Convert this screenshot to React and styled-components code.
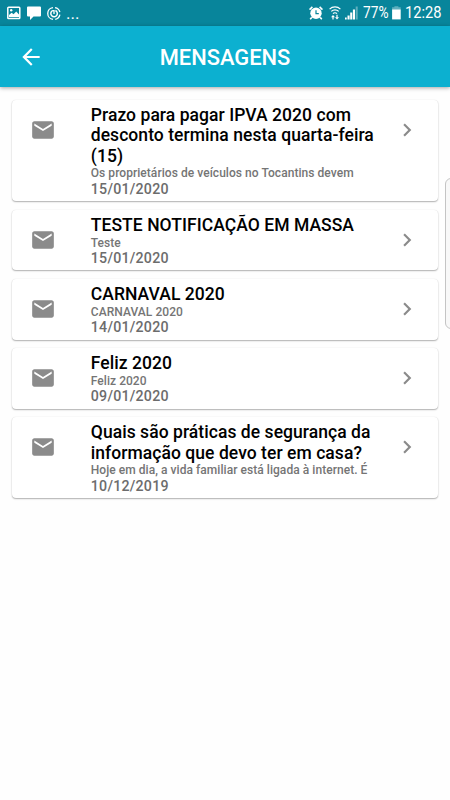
import React from 'react';
import styled, {createGlobalStyle} from 'styled-components';

const teal = '#0cb0d0';
const tealDark = '#08859b';
const iconGrey = '#8b8b8b';

const messages = [
    {
        title: ['Prazo para pagar IPVA 2020 com', 'desconto termina nesta quarta-feira', '(15)'],
        text: 'Os proprietários de veículos no Tocantins devem',
        date: '15/01/2020',
    },
    {title: ['TESTE NOTIFICAÇÃO EM MASSA'], text: 'Teste', date: '15/01/2020'},
    {title: ['CARNAVAL 2020'], text: 'CARNAVAL 2020', date: '14/01/2020'},
    {title: ['Feliz 2020'], text: 'Feliz 2020', date: '09/01/2020'},
    {
        title: ['Quais são práticas de segurança da', 'informação que devo ter em casa?'],
        text: 'Hoje em dia, a vida familiar está ligada à internet. É',
        date: '10/12/2019',
    },
];

const StatusIcons = () => (
    <Notifications>
        <svg width="14" height="14" viewBox="0 0 14 14">
            <rect x="0.8" y="1.3" width="12" height="11.2" rx="0.8" fill="none" stroke="#fff" strokeWidth="1.5" />
            <path d="M2 11V9l2.6-2.2 2 1.5L9.2 5.6 12 8.5V11z" fill="#fff" />
            <circle cx="4.2" cy="4.2" r="1.2" fill="#fff" />
        </svg>
        <svg width="14" height="14" viewBox="0 0 14 14">
            <path d="M1 0.5h12a1 1 0 0 1 1 1v8a1 1 0 0 1-1 1H6.5L3 14v-3.5H1a1 1 0 0 1-1-1v-8a1 1 0 0 1 1-1z" fill="#fff" />
        </svg>
        <svg width="14" height="15" viewBox="0 0 15 15" fill="none" stroke="#fff">
            <path d="M8.6 1.1a6.4 6.4 0 0 1 5.2 5M13.8 8.6a6.4 6.4 0 0 1-5 5.1M6.4 13.8A6.4 6.4 0 0 1 6.4 1.1" strokeWidth="1.4" />
            <path d="M9 4.3a3.5 3.5 0 1 1-3.4 0.3" strokeWidth="1.6" />
            <path d="M5.5 4.4h2v3.6" strokeWidth="1.4" />
        </svg>
        <Dots>...</Dots>
    </Notifications>
);

const SystemIcons = () => (
    <System>
        <svg width="14" height="14" viewBox="0 0 14 14">
            <path d="M0.5 3.6 3.4 0.8M13.5 3.6 10.6 0.8M2.8 11.4 1.2 13.2M11.2 11.4l1.6 1.8" stroke="#fff" strokeWidth="1.6" />
            <circle cx="7" cy="7.3" r="5.7" fill="#fff" />
            <path d="M7 4.2v3.4h2.8" fill="none" stroke={tealDark} strokeWidth="1.2" />
        </svg>
        <Wifi viewBox="0 0 12 14">
            <path d="M0.6 3.2a7.6 7.6 0 0 1 10.8 0M2.3 5.4a5.3 5.3 0 0 1 7.4 0M4 7.6a2.8 2.8 0 0 1 4 0" />
            <path d="M2 11.2 4 8.9l2 2.3zM6 11.2h4l-2 2.3z" fill="#fff" stroke="none" />
            <path d="M4 10v3.4M8 8.8v3" />
        </Wifi>
        <svg width="13" height="14" viewBox="0 0 13 14" fill="#fff">
            <rect x="0" y="11.5" width="1.7" height="2" />
            <rect x="2.5" y="9.5" width="2.1" height="4" />
            <rect x="5.2" y="6.5" width="2.1" height="7" />
            <rect x="7.9" y="3.5" width="2.1" height="10" />
            <rect x="10.7" y="0.5" width="2" height="13" opacity="0.35" />
        </svg>
        <Percent>77%</Percent>
        <svg width="9" height="14" viewBox="0 0 9 14" fill="#fff">
            <path d="M2.4 0.3h4v1h2.3v2.2H0.1V1.3h2.3z" opacity="0.35" />
            <rect x="0.1" y="3.4" width="8.6" height="10" />
        </svg>
        <Clock>12:28</Clock>
    </System>
);

const Message = ({title, text, date}) => (
    <Card>
        <MailIcon viewBox="0 0 24 24">
            <path d="M20 4H4c-1.1 0-1.99.9-1.99 2L2 18c0 1.1.9 2 2 2h16c1.1 0 2-.9 2-2V6c0-1.1-.9-2-2-2zm0 4l-8 5-8-5V6l8 5 8-5v2z" />
        </MailIcon>
        <Body>
            {title.map(line => (
                <Title key={line}>{line}</Title>
            ))}
            <Text>{text}</Text>
            <Date>{date}</Date>
        </Body>
        <Chevron viewBox="0 0 24 24">
            <path d="M10 6 8.59 7.41 13.17 12l-4.58 4.59L10 18l6-6z" />
        </Chevron>
    </Card>
);

const App = () => (
    <Screen>
        <GlobalStyle />
        <StatusBar>
            <StatusIcons />
            <SystemIcons />
        </StatusBar>
        <Header>
            <Back viewBox="0 0 24 24">
                <path d="M20 11H7.83l5.59-5.59L12 4l-8 8 8 8 1.41-1.41L7.83 13H20v-2z" />
            </Back>
            <Heading>MENSAGENS</Heading>
        </Header>
        <List>
            {messages.map(message => (
                <Message key={message.title[0]} {...message} />
            ))}
        </List>
        <EdgeHandle />
    </Screen>
);

export default App;

const GlobalStyle = createGlobalStyle`
    body {
        margin: 0;
        font-family: Roboto, sans-serif;
        background: #fefefe;
    }
`;

const Screen = styled.div`
    position: relative;
    display: flex;
    flex-direction: column;
    width: 450px;
    height: 800px;
    overflow: hidden;
    background: #fefefe;
`;

const StatusBar = styled.div`
    display: flex;
    justify-content: space-between;
    box-sizing: border-box;
    height: 26px;
    padding: 0 9px 0 7px;
    background: ${tealDark};
    color: white;
`;

const Notifications = styled.div`
    display: flex;
    align-items: center;
    gap: 6px;
`;

const Dots = styled.span`
    font-size: 17px;
    line-height: 29px;
    margin-left: -1px;
`;

const System = styled.div`
    display: flex;
    align-items: center;
`;

const Wifi = styled.svg`
    width: 12px;
    height: 14px;
    margin: 0 4px 0 6px;
    fill: none;
    stroke: white;
    stroke-width: 1.2px;
`;

const Percent = styled.span`
    width: 27px;
    margin-left: 5px;
    margin-right: 2px;
    font-size: 16.5px;
    line-height: 28px;
    white-space: nowrap;
    transform: scaleX(0.83);
    transform-origin: left;
`;

const Clock = styled.span`
    width: 36px;
    margin-left: 4px;
    font-size: 16.5px;
    line-height: 28px;
    white-space: nowrap;
    transform: scaleX(0.89);
    transform-origin: left;
`;

const Header = styled.header`
    position: relative;
    display: flex;
    align-items: center;
    justify-content: center;
    height: 61px;
    background: ${teal};
    box-shadow: 0 1px 4px rgba(0, 0, 0, 0.35);
`;

const Back = styled.svg`
    position: absolute;
    left: 17.6px;
    width: 26px;
    height: 26px;
    fill: white;
`;

const Heading = styled.h1`
    margin: 2px 0 0;
    color: white;
    font-size: 21.9px;
    font-weight: 500;
`;

const List = styled.main`
    display: flex;
    flex-direction: column;
    gap: 8.6px;
    padding: 12.7px 12px 0;
`;

const Card = styled.article`
    display: flex;
    align-items: flex-start;
    padding: 5px 17.7px 3.4px 17.6px;
    border-radius: 4px;
    background: white;
    box-shadow: 0 1px 1.5px rgba(0, 0, 0, 0.3), 0 0 1px rgba(0, 0, 0, 0.12);
`;

const MailIcon = styled.svg`
    width: 26px;
    height: 26px;
    margin-top: 12.2px;
    fill: ${iconGrey};
`;

const Body = styled.div`
    flex: 1;
    margin-left: 35.2px;
    white-space: nowrap;
`;

const Title = styled.div`
    font-size: 17.5px;
    font-weight: 500;
    line-height: 20.6px;
    letter-spacing: 0.05px;
    color: black;
`;

const Text = styled.div`
    font-size: 12px;
    font-weight: 500;
    line-height: 14.2px;
    letter-spacing: 0.05px;
    color: #757575;
`;

const Date = styled.div`
    font-size: 14.2px;
    font-weight: 500;
    line-height: 17.3px;
    letter-spacing: 0.24px;
    color: #6c6c6c;
`;

const Chevron = styled.svg`
    width: 26px;
    height: 26px;
    margin-top: 12.2px;
    fill: ${iconGrey};
`;

const EdgeHandle = styled.div`
    position: absolute;
    top: 178px;
    right: -8px;
    box-sizing: border-box;
    width: 13px;
    height: 151px;
    border: 1px solid #c4c4c4;
    border-radius: 6px;
    background: #f8f8f8;
`;
